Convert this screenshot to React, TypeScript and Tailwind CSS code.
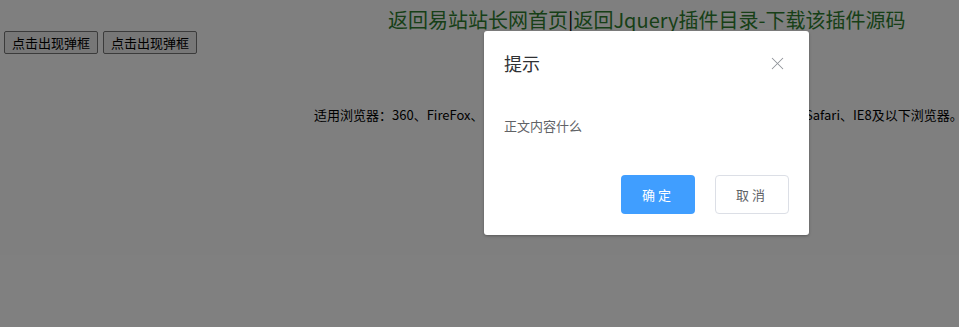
import { X } from 'lucide-react';

const font = "font-['Noto_Sans_CJK_SC','Microsoft_YaHei',sans-serif]";

export default function App() {
  return (
    <div className={`relative min-h-screen h-[327px] overflow-hidden bg-white text-black ${font}`}>
      {/* Page content */}
      <div className="pl-[388px] pt-[7px] text-[20px] leading-[26px] whitespace-nowrap">
        <a href="#" className="text-[#2f7f2f]">返回易站站长网首页</a>
        <span>|</span>
        <a href="#" className="text-[#2f7f2f]">返回Jquery插件目录</a>
        <span className="text-[#2f7f2f]">-</span>
        <a href="#" className="text-[#2f7f2f]">下载该插件源码</a>
      </div>
      <div className="flex gap-[5px] pl-[4px] mt-[-2px]">
        <button className="w-[94px] h-[23px] bg-[#efefef] border border-[#767676] rounded-[2px] text-[13px] leading-none">
          点击出现弹框
        </button>
        <button className="w-[94px] h-[23px] bg-[#efefef] border border-[#767676] rounded-[2px] text-[13px] leading-none">
          点击出现弹框
        </button>
      </div>
      <p className="pl-[314px] mt-[51px] text-[13px] leading-[20px] whitespace-nowrap">
        适用浏览器：360、FireFox
        <span className="tracking-[1.2px]">、Chrome、Opera、傲游、搜狗、世界之窗. 不支持</span>
        Safari、IE8及以下浏览器。
      </p>

      {/* Mask */}
      <div className="absolute inset-0 bg-black/50" />

      {/* Dialog */}
      <div className="absolute left-[484px] top-[31px] w-[325px] bg-white rounded-[3px] shadow-[0_1px_3px_rgba(0,0,0,0.3)]">
        <div className="flex items-center justify-between pl-[20px] pr-[21px] pt-[20px] pb-[10px]">
          <span className="text-[18px] leading-[24px] text-[#303133]">提示</span>
          <X className="w-[21px] h-[21px] text-[#909399]" strokeWidth={1.15} />
        </div>
        <div className="px-[20px] py-[30px] text-[13px] leading-[21px] text-[#606266]">正文内容什么</div>
        <div className="flex justify-end gap-[20px] px-[20px] pt-[9px] pb-[21px]">
          <button className="w-[74px] h-[39px] rounded-[4px] bg-[#409eff] text-white text-[13px] tracking-[3px]">
            确定
          </button>
          <button className="w-[74px] h-[39px] rounded-[4px] border border-[#dcdfe6] bg-white text-[#606266] text-[13px] tracking-[3px]">
            取消
          </button>
        </div>
      </div>
    </div>
  );
}
